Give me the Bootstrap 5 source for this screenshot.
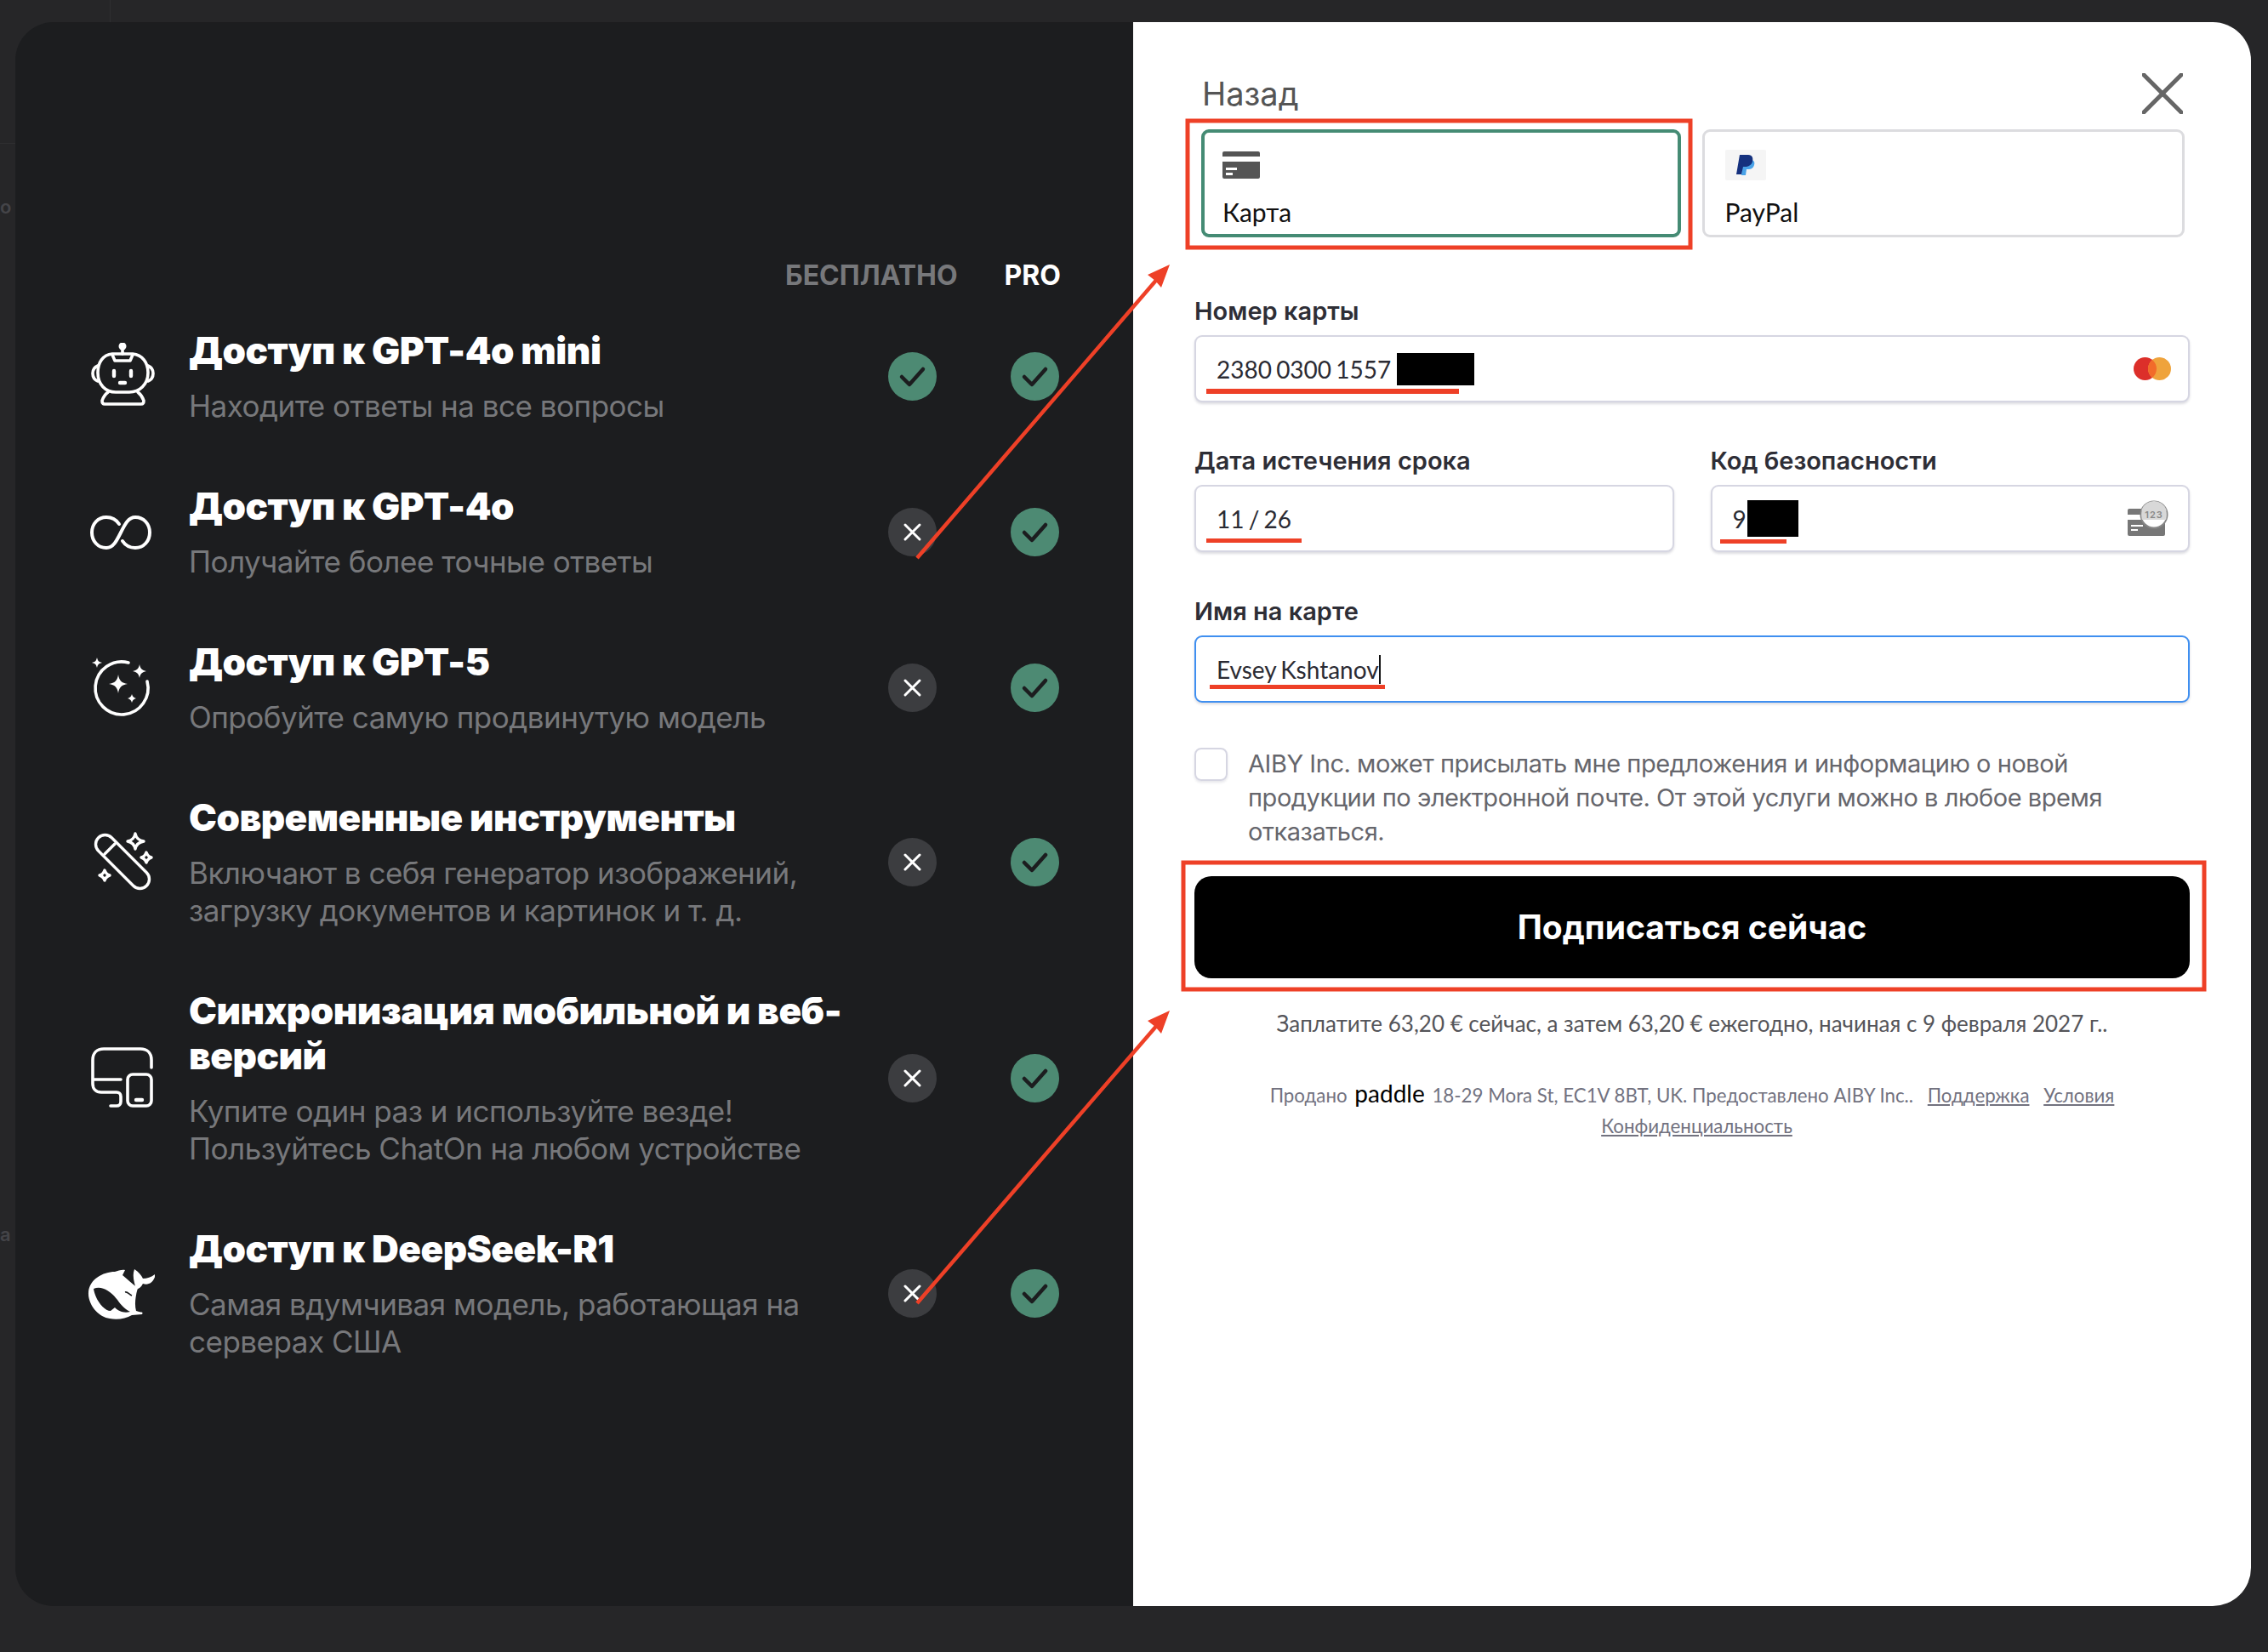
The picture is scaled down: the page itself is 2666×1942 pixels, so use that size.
<!DOCTYPE html>
<html lang="ru">
<head>
    <meta charset="UTF-8">
    <meta name="viewport" content="width=device-width, initial-scale=1.0">
    <title>ChatOn Pro</title>
    <link rel="stylesheet" href="https://cdn.jsdelivr.net/npm/bootstrap@5.3.0/dist/css/bootstrap.min.css">
    <style>
        body {
            width: 2666px;
            height: 1942px;
            overflow: hidden;
            background: #262628;
            position: relative;
            font-family: "Lato", "Liberation Sans", sans-serif;
        }
        .stray-line-v { position: absolute; left: 129px; top: 0; width: 1px; height: 26px; background: #2f2f31; }
        .stray-line-h { position: absolute; left: 0; top: 168px; width: 18px; height: 1px; background: #2f2f31; }
        .stray-letter { position: absolute; left: 0; color: #444448; font: 600 22px/30px "Inter", sans-serif; }
        .sheet {
            position: absolute;
            left: 18px;
            top: 26px;
            width: 2628px;
            height: 1862px;
            border-radius: 45px;
            overflow: hidden;
        }

        /* left side */
        .plans {
            width: 1314px;
            flex: none;
            background: #1c1d1f;
            padding: 278px 0 0 84px;
            font-family: "Inter", "Liberation Sans", sans-serif;
        }
        .plan-head {
            gap: 55px;
            padding-right: 85px;
            margin-bottom: 42px;
            font-size: 32px;
            line-height: 40px;
            font-weight: 700;
        }
        .plan-free { color: #77787b; }
        .plan-pro { color: #fff; }
        .feature-list { gap: 70px; }
        .feature-icon { width: 80px; height: 80px; flex: none; margin-right: 40px; }
        .feature-text { width: 790px; flex: none; margin-right: 32px; }
        .feature-title {
            color: #fff;
            font-size: 44px;
            line-height: 53px;
            font-weight: 900;
            margin: 0 0 16px;
            letter-spacing: -0.5px;
        }
        .feature-sub {
            color: #77787b;
            font-size: 35px;
            line-height: 44px;
            letter-spacing: -0.5px;
            margin: 0;
        }
        .tick { width: 57px; height: 57px; flex: none; }
        .tick + .tick { margin-left: 87px; }

        /* right side */
        .checkout {
            flex: 1;
            background: #fff;
            padding: 58px 72px 0;
        }
        .back-row { height: 52px; margin: 0 8px 16px 9px; }
        .back-link { color: #555; font: 400 38px/52px "Inter", sans-serif; }
        .method-row { gap: 25px; margin: 0 6px 68px 8px; }
        .method-box {
            flex: 1;
            height: 127px;
            border: 3px solid #dcdcdf;
            border-radius: 9px;
            padding: 21px 24px 0;
            color: #111;
            font-size: 30px;
            line-height: 40px;
        }
        .method-box svg { display: block; margin-bottom: 17px; }
        .method-on { border: 4px solid #458b74; padding: 22px 21px 0; }
        .method-on svg { margin-bottom: 19px; }
        .field-label {
            color: #2e2e36;
            font: 600 29px/40px "Inter", sans-serif;
            margin: -1px 0 8px;
            display: block;
        }
        .field-label-name { margin-top: 50px; }
        .field-box {
            height: 79px;
            border: 2px solid #d6d6e2;
            border-radius: 9px;
            box-shadow: 0 2px 3px rgba(60, 60, 90, 0.18);
            padding: 0 24px;
            color: #2b2b33;
            font-size: 28px;
            word-spacing: -2px;
            background: #fff;
        }
        .field-focus { border-color: #3f8ff0; }
        .field-gap { margin-bottom: 50px; }
        .field-gap-col { gap: 43px; }
        .redact { display: inline-block; background: #000; }
        .redact-num { width: 91px; height: 38px; margin-left: 7px; }
        .redact-cvv { width: 60px; height: 43px; margin-left: 1px; }
        .caret-bar { display: inline-block; width: 2px; height: 34px; background: #111; }
        .agree-row { gap: 24px; margin: 53px 0 31px; }
        .agree-box {
            width: 39px;
            height: 39px;
            flex: none;
            border: 2px solid #d6d6e2;
            border-radius: 8px;
            box-shadow: 0 2px 3px rgba(60, 60, 90, 0.12);
        }
        .agree-text {
            color: #66666c;
            font: 400 29px/40px "Inter", sans-serif;
            letter-spacing: -0.45px;
            margin: -1px 0 1px;
        }
        .pay-btn {
            height: 120px;
            background: #000;
            border: 0;
            border-radius: 20px;
            color: #fff;
            font: 700 39px/120px "Inter", sans-serif;
            padding: 0;
        }
        .pay-note {
            margin: 33px 0 44px;
            text-align: center;
            color: #55555a;
            font-size: 26px;
            line-height: 40px;
        }
        .legal {
            text-align: center;
            color: #72727f;
            font-size: 22.3px;
            line-height: 36px;
            margin: 0;
        }
        .legal a { color: #72727f; margin-left: 11px; }
        .paddle-word { color: #000; font-size: 28px; margin: 0 3px; }
        .notes { position: absolute; left: 0; top: 0; pointer-events: none; }
    </style>
</head>
<body>
    <div class="stray-line-v"></div>
    <div class="stray-line-h"></div>
    <span class="stray-letter" style="top: 228px">o</span>
    <span class="stray-letter" style="top: 1436px">a</span>

    <div class="sheet d-flex">
        <!-- Plans -->
        <div class="plans">
            <div class="plan-head d-flex justify-content-end">
                <span class="plan-free">БЕСПЛАТНО</span>
                <span class="plan-pro">PRO</span>
            </div>

            <div class="feature-list d-flex flex-column">
                <div class="d-flex align-items-center">
                    <svg class="feature-icon" viewBox="20 23 80 80" fill="none" stroke="#fff" stroke-width="3.6" stroke-linecap="round" stroke-linejoin="round">
                        <circle cx="62" cy="27" r="4.5" fill="#fff" stroke="none"/>
                        <path d="M62 30V36"/>
                        <path d="M50 36H74C85 37 92 46 92 58C92 72 82 81 70 81H54C42 81 33 72 33 58C33 46 39 37 50 36Z"/>
                        <path d="M50 37L53 44H71L74 37"/>
                        <path d="M33 50C28 52 27 55 27 59C27 63 28 66 33 68M92 50C97 52 98 55 98 59C98 63 97 66 92 68"/>
                        <path d="M52 56V62M72 56V62" stroke-width="4.4"/>
                        <path d="M59 70H65" stroke-width="4.4"/>
                        <path d="M45 81C41 84 39 88 38 91C38 94 39 95 41 95H84C86 95 87 94 87 91C86 88 84 84 80 81"/>
                    </svg>
                    <div class="feature-text">
                        <h3 class="feature-title">Доступ к GPT-4o mini</h3>
                        <p class="feature-sub">Находите ответы на все вопросы</p>
                    </div>
                    <svg class="tick" viewBox="0 0 57 57"><circle cx="28.5" cy="28.5" r="28.5" fill="#4d8a73"/><path d="M16 29L25 38L41 20" fill="none" stroke="#1c1d1f" stroke-width="4.5" stroke-linecap="round" stroke-linejoin="round"/></svg>
                    <svg class="tick" viewBox="0 0 57 57"><circle cx="28.5" cy="28.5" r="28.5" fill="#4d8a73"/><path d="M16 29L25 38L41 20" fill="none" stroke="#1c1d1f" stroke-width="4.5" stroke-linecap="round" stroke-linejoin="round"/></svg>
                </div>

                <div class="d-flex align-items-center">
                    <svg class="feature-icon" viewBox="0 0 80 80" fill="none" stroke="#fff" stroke-width="4" stroke-linecap="round">
                        <path d="M38 30C34 24 29 22 23 22C13 22 6 30 6 40C6 50 13 58 23 58C31 58 35 50 40 40C45 30 49 22 57 22C67 22 74 30 74 40C74 50 67 58 57 58C51 58 46 56 42 50"/>
                    </svg>
                    <div class="feature-text">
                        <h3 class="feature-title">Доступ к GPT-4o</h3>
                        <p class="feature-sub">Получайте более точные ответы</p>
                    </div>
                    <svg class="tick" viewBox="0 0 57 57"><circle cx="28.5" cy="28.5" r="28.5" fill="#3c3d40"/><path d="M20 20L37 37M37 20L20 37" stroke="#fff" stroke-width="3" stroke-linecap="round"/></svg>
                    <svg class="tick" viewBox="0 0 57 57"><circle cx="28.5" cy="28.5" r="28.5" fill="#4d8a73"/><path d="M16 29L25 38L41 20" fill="none" stroke="#1c1d1f" stroke-width="4.5" stroke-linecap="round" stroke-linejoin="round"/></svg>
                </div>

                <div class="d-flex align-items-center">
                    <svg class="feature-icon" viewBox="20 19 80 80" fill="none">
                        <path d="M69 29A31 31 0 1 0 91 51" stroke="#fff" stroke-width="3.6" stroke-linecap="round"/>
                        <g fill="#fff">
                            <path d="M57 43C58 50 61 53 68 54C61 55 58 58 57 65C56 58 53 55 46 54C53 53 56 50 57 43Z"/>
                            <path d="M82 31C83 36 85 38 90 39C85 40 83 42 82 47C81 42 79 40 74 39C79 38 81 36 82 31Z"/>
                            <path d="M32 23C33 27 34 28 38 29C34 30 33 31 32 35C31 31 30 30 26 29C30 28 31 27 32 23Z"/>
                            <path d="M73 66C74 69 75 70 78 71C75 72 74 73 73 76C72 73 71 72 68 71C71 70 72 69 73 66Z"/>
                        </g>
                    </svg>
                    <div class="feature-text">
                        <h3 class="feature-title">Доступ к GPT-5</h3>
                        <p class="feature-sub">Опробуйте самую продвинутую модель</p>
                    </div>
                    <svg class="tick" viewBox="0 0 57 57"><circle cx="28.5" cy="28.5" r="28.5" fill="#3c3d40"/><path d="M20 20L37 37M37 20L20 37" stroke="#fff" stroke-width="3" stroke-linecap="round"/></svg>
                    <svg class="tick" viewBox="0 0 57 57"><circle cx="28.5" cy="28.5" r="28.5" fill="#4d8a73"/><path d="M16 29L25 38L41 20" fill="none" stroke="#1c1d1f" stroke-width="4.5" stroke-linecap="round" stroke-linejoin="round"/></svg>
                </div>

                <div class="d-flex align-items-center">
                    <svg class="feature-icon" viewBox="20 23 80 80" fill="none" stroke="#fff" stroke-width="3.4" stroke-linejoin="round" stroke-linecap="round">
                        <rect x="22" y="51" width="80" height="22" rx="11" transform="rotate(45 62 62)"/>
                        <path d="M41 53L53 41"/>
                        <path d="M77 29C78 34 81 37 87 38C81 39 78 42 77 47C76 42 73 39 68 38C73 37 76 34 77 29Z"/>
                        <path d="M90 51C91 54 92 56 96 57C92 58 91 60 90 63C89 60 88 58 84 57C88 56 89 54 90 51Z"/>
                        <path d="M41 72C42 75 43 77 47 78C43 79 42 81 41 84C40 81 39 79 35 78C39 77 40 75 41 72Z"/>
                    </svg>
                    <div class="feature-text">
                        <h3 class="feature-title">Современные инструменты</h3>
                        <p class="feature-sub">Включают в себя генератор изображений, загрузку документов и картинок и т. д.</p>
                    </div>
                    <svg class="tick" viewBox="0 0 57 57"><circle cx="28.5" cy="28.5" r="28.5" fill="#3c3d40"/><path d="M20 20L37 37M37 20L20 37" stroke="#fff" stroke-width="3" stroke-linecap="round"/></svg>
                    <svg class="tick" viewBox="0 0 57 57"><circle cx="28.5" cy="28.5" r="28.5" fill="#4d8a73"/><path d="M16 29L25 38L41 20" fill="none" stroke="#1c1d1f" stroke-width="4.5" stroke-linecap="round" stroke-linejoin="round"/></svg>
                </div>

                <div class="d-flex align-items-center">
                    <svg class="feature-icon" viewBox="20 17 80 80" fill="none" stroke="#fff" stroke-width="3.6" stroke-linecap="round" stroke-linejoin="round">
                        <path d="M96 45V36C96 28 91 23 83 23H40C32 23 27 28 27 36V64C27 70 31 74 37 74H55C58 74 60 76 60 79V85C60 88 58 90 55 90H48"/>
                        <path d="M28 59H60"/>
                        <rect x="68" y="53" width="28" height="37" rx="6"/>
                        <path d="M78 83H85" stroke-width="4.4"/>
                    </svg>
                    <div class="feature-text">
                        <h3 class="feature-title">Синхронизация мобильной и веб-версий</h3>
                        <p class="feature-sub">Купите один раз и используйте везде!<br>Пользуйтесь ChatOn на любом устройстве</p>
                    </div>
                    <svg class="tick" viewBox="0 0 57 57"><circle cx="28.5" cy="28.5" r="28.5" fill="#3c3d40"/><path d="M20 20L37 37M37 20L20 37" stroke="#fff" stroke-width="3" stroke-linecap="round"/></svg>
                    <svg class="tick" viewBox="0 0 57 57"><circle cx="28.5" cy="28.5" r="28.5" fill="#4d8a73"/><path d="M16 29L25 38L41 20" fill="none" stroke="#1c1d1f" stroke-width="4.5" stroke-linecap="round" stroke-linejoin="round"/></svg>
                </div>

                <div class="d-flex align-items-center">
                    <svg class="feature-icon" viewBox="20 19 80 80">
                        <path fill="#fff" d="M22 57C23 42 39 33 53 33C57 32 61 30 65 31L62 37C68 42 73 47 80 52C77 62 76 72 78 79C84 81 87 80 85 83L73 84C66 88 56 90 47 88C33 86 21 71 22 57Z"/>
                        <path fill="#fff" d="M76 30C81 33 84 37 86 41C91 41 97 39 101 35C100 44 93 50 86 47C84 51 81 53 78 54C76 46 73 38 76 30Z"/>
                        <path fill="#1c1d1f" d="M28 53C38 49 48 56 56 66C60 72 66 78 71 80C63 82 57 79 53 75L48 79C40 79 30 66 28 53Z"/>
                        <path fill="none" stroke="#1c1d1f" stroke-width="1.6" d="M65 57C68 56 70 60 73 61"/>
                    </svg>
                    <div class="feature-text">
                        <h3 class="feature-title">Доступ к DeepSeek-R1</h3>
                        <p class="feature-sub">Самая вдумчивая модель, работающая на серверах США</p>
                    </div>
                    <svg class="tick" viewBox="0 0 57 57"><circle cx="28.5" cy="28.5" r="28.5" fill="#3c3d40"/><path d="M20 20L37 37M37 20L20 37" stroke="#fff" stroke-width="3" stroke-linecap="round"/></svg>
                    <svg class="tick" viewBox="0 0 57 57"><circle cx="28.5" cy="28.5" r="28.5" fill="#4d8a73"/><path d="M16 29L25 38L41 20" fill="none" stroke="#1c1d1f" stroke-width="4.5" stroke-linecap="round" stroke-linejoin="round"/></svg>
                </div>
            </div>
        </div>

        <!-- Checkout -->
        <div class="checkout">
            <div class="back-row d-flex justify-content-between align-items-center">
                <span class="back-link">Назад</span>
                <svg width="48" height="48" viewBox="0 0 48 48"><path d="M2 2L46 46M46 2L2 46" stroke="#666" stroke-width="5" stroke-linecap="round"/></svg>
            </div>

            <div class="method-row d-flex">
                <div class="method-box method-on">
                    <svg width="44" height="32" viewBox="0 0 44 32">
                        <path fill="#555" d="M2 0H42A2 2 0 0 1 44 2V6H0V2A2 2 0 0 1 2 0ZM0 12H44V30A2 2 0 0 1 42 32H2A2 2 0 0 1 0 30Z"/>
                        <path fill="#fff" d="M4 19H17V22H4ZM4 25H12V28H4Z"/>
                    </svg>
                    Карта
                </div>
                <div class="method-box">
                    <svg width="48" height="36" viewBox="0 0 48 36">
                        <rect width="48" height="36" rx="2" fill="#f5f5f5"/>
                        <path fill="#4aa3e8" d="M20 12H30C34 12 35 15 34 18C33 22 30 23 27 23H25L24 30H19Z"/>
                        <path fill="#15317e" d="M17 6H27C32 6 33 10 32 14C31 18 27 20 23 20H21L19 29H13Z"/>
                    </svg>
                    PayPal
                </div>
            </div>

            <label class="field-label">Номер карты</label>
            <div class="field-box field-gap d-flex align-items-center">
                2380 0300 1557<span class="redact redact-num"></span>
                <svg class="ms-auto" width="44" height="27" viewBox="0 0 44 27" style="margin-right: -4px">
                    <circle cx="13.5" cy="13.5" r="13.5" fill="#dc2f2a"/>
                    <circle cx="30.5" cy="13.5" r="13.5" fill="#efa33c"/>
                    <path fill="#f26b2a" d="M22 3A13.5 13.5 0 0 1 22 24A13.5 13.5 0 0 1 22 3Z"/>
                </svg>
            </div>

            <div class="d-flex field-gap-col">
                <div class="flex-fill w-50">
                    <label class="field-label">Дата истечения срока</label>
                    <div class="field-box d-flex align-items-center">11 / 26</div>
                </div>
                <div class="flex-fill w-50">
                    <label class="field-label">Код безопасности</label>
                    <div class="field-box d-flex align-items-center">
                        9<span class="redact redact-cvv"></span>
                        <svg class="ms-auto" width="50" height="44" viewBox="0 0 50 44" style="margin-right: -3px">
                            <rect x="0" y="14" width="44" height="32" rx="2" fill="#777" transform="translate(0 -4)"/>
                            <rect x="0" y="17" width="44" height="6" fill="#fff"/>
                            <path fill="#fff" d="M4 29H18V31H4ZM4 34H12V36H4Z"/>
                            <circle cx="31" cy="17" r="15.5" fill="#fff" stroke="#888" stroke-width="2"/>
                            <path fill="#d8d8d8" d="M16.5 11A15.5 15.5 0 0 1 45.5 11V21A15.5 15.5 0 0 1 45 23H17A15.5 15.5 0 0 1 16.5 21Z"/>
                            <text x="31" y="21" text-anchor="middle" font-family="Inter, sans-serif" font-size="11" font-weight="600" letter-spacing="1" fill="#888">123</text>
                        </svg>
                    </div>
                </div>
            </div>

            <label class="field-label field-label-name">Имя на карте</label>
            <div class="field-box field-focus d-flex align-items-center">Evsey Kshtanov<span class="caret-bar"></span></div>

            <div class="agree-row d-flex">
                <div class="agree-box"></div>
                <p class="agree-text">AIBY Inc. может присылать мне предложения и информацию о новой продукции по электронной почте. От этой услуги можно в любое время отказаться.</p>
            </div>

            <button class="btn pay-btn w-100">Подписаться сейчас</button>

            <p class="pay-note">Заплатите 63,20 € сейчас, а затем 63,20 € ежегодно, начиная с 9 февраля 2027 г..</p>
            <p class="legal">Продано <span class="paddle-word">paddle</span> 18-29 Mora St, EC1V 8BT, UK. Предоставлено AIBY Inc.. <a href="#">Поддержка</a> <a href="#">Условия</a><br><a href="#">Конфиденциальность</a></p>
        </div>
    </div>

    <!-- Red annotations drawn over the screenshot -->
    <svg class="notes" width="2666" height="1942" viewBox="0 0 2666 1942" fill="none" stroke="#ee4027" stroke-width="5">
        <rect x="1396" y="142" width="591" height="149"/>
        <rect x="1391" y="1014" width="1200" height="149"/>
        <path d="M1078 656L1362 326M1078 1532L1362 1203" stroke-width="4.5"/>
        <g fill="#ee4027" stroke="none">
            <path d="M1375 311L1349 323L1358 330L1365 338Z"/>
            <path d="M1375 1188L1349 1200L1358 1207L1365 1215Z"/>
            <rect x="1418" y="457" width="297" height="6"/>
            <rect x="1418" y="633" width="112" height="5"/>
            <rect x="2022" y="634" width="78" height="5"/>
            <rect x="1422" y="805" width="206" height="5"/>
        </g>
    </svg>

    <script src="https://cdn.jsdelivr.net/npm/bootstrap@5.3.0/dist/js/bootstrap.bundle.min.js"></script>
</body>
</html>
